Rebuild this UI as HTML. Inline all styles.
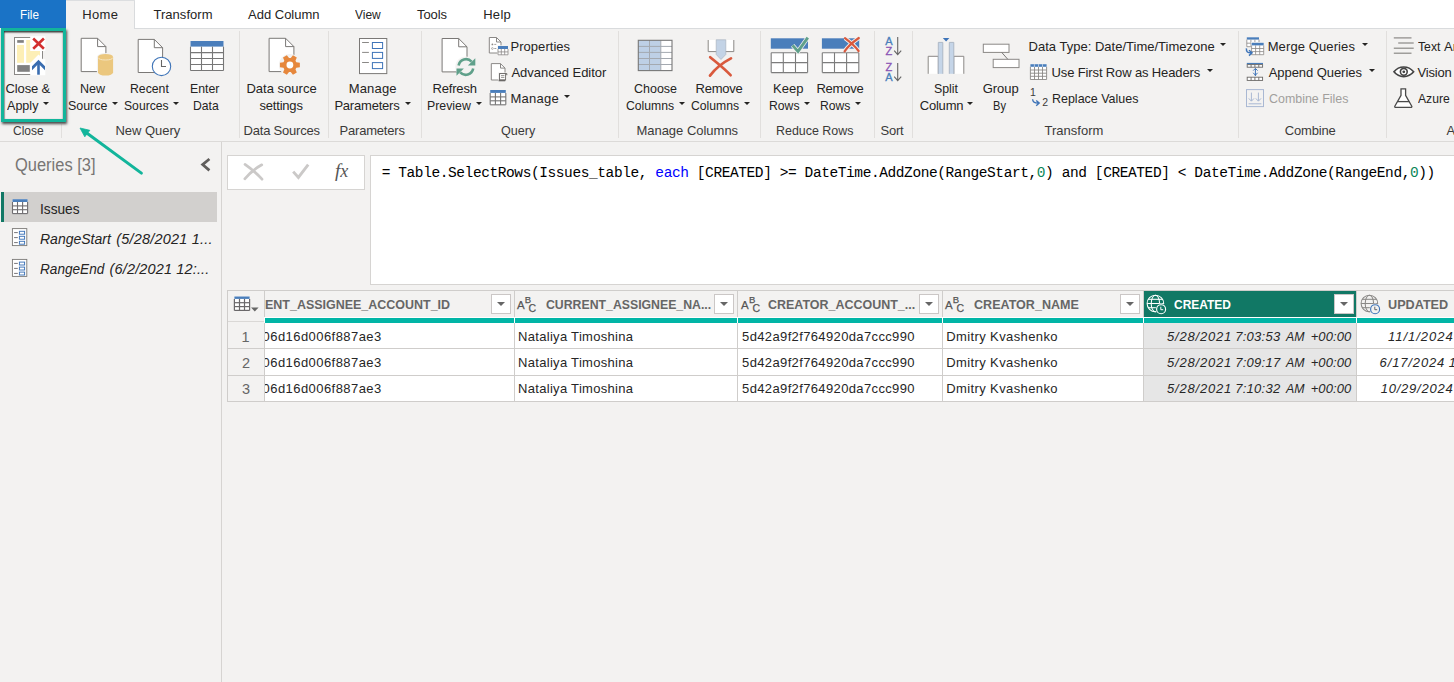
<!DOCTYPE html>
<html lang="en"><head><meta charset="utf-8"><title>Power Query Editor</title>
<style>
html,body{margin:0;padding:0}
body{width:1454px;height:682px;overflow:hidden;position:relative;background:#f3f2f1;font-family:"Liberation Sans",sans-serif;color:#252423}
.a{position:absolute}
.t{position:absolute;white-space:pre;line-height:20px}
.sep{position:absolute;top:31px;width:1px;height:107px;background:#e1dfdd}
.dd{position:absolute;width:0;height:0;border-left:3.1px solid transparent;border-right:3.1px solid transparent;border-top:3.1px solid #252423}
.hb{position:absolute;top:294px;width:18px;height:18px;background:#fff;border:1px solid #cbc7c6}
.hb:after{content:"";position:absolute;left:5px;top:7px;border-left:4.1px solid transparent;border-right:4.1px solid transparent;border-top:4.2px solid #666}
.cell{position:absolute;background:#fff}
.mono{font-family:"Liberation Mono",monospace}
svg{position:absolute;left:0;top:0}
</style></head><body>
<div class="a" style="left:0;top:0;width:1454px;height:28px;background:#fff"></div>
<div class="a" style="left:134px;top:28px;width:1320px;height:1px;background:#d9dbdd"></div>
<div class="a" style="left:0;top:0;width:66px;height:28px;background:#1a73c6"></div>
<div class="a" style="left:66px;top:0;width:69px;height:29px;background:#f3f2f1;box-shadow:inset 0 1px 0 #dcdee0, inset -1px 0 0 #d9dbdd"></div>
<div class="a" style="left:0;top:141px;width:1454px;height:1px;background:#dcdad8"></div>
<div class="sep" style="left:61px;top:124px;height:14px"></div>
<div class="sep" style="left:239px"></div>
<div class="sep" style="left:328px"></div>
<div class="sep" style="left:421px"></div>
<div class="sep" style="left:618px"></div>
<div class="sep" style="left:760px"></div>
<div class="sep" style="left:874px"></div>
<div class="sep" style="left:912px"></div>
<div class="sep" style="left:1238px"></div>
<div class="sep" style="left:1386px"></div>
<div class="dd" style="left:42.8px;top:102px"></div>
<div class="dd" style="left:112px;top:102px"></div>
<div class="dd" style="left:172.9px;top:102px"></div>
<div class="dd" style="left:404.9px;top:102px"></div>
<div class="dd" style="left:476px;top:102px"></div>
<div class="dd" style="left:678.8px;top:102px"></div>
<div class="dd" style="left:744px;top:102px"></div>
<div class="dd" style="left:804px;top:102px"></div>
<div class="dd" style="left:855px;top:102px"></div>
<div class="dd" style="left:967px;top:102px"></div>
<div class="dd" style="left:563.8px;top:95.4px"></div>
<div class="dd" style="left:1220px;top:43.2px"></div>
<div class="dd" style="left:1206.8px;top:69.4px"></div>
<div class="dd" style="left:1362px;top:43.2px"></div>
<div class="dd" style="left:1369px;top:69.4px"></div>
<div class="a" style="left:1px;top:28px;width:59px;height:88px;border:3px solid #12b59b;box-shadow:0.5px 1.5px 2.5px rgba(0,0,0,.7), inset 0 1.5px 1.5px rgba(0,0,0,.75), inset 1px 0 1px rgba(0,0,0,.25)"></div>
<div class="a" style="left:221px;top:142px;width:1px;height:540px;background:#d6d4d2"></div>
<div class="a" style="left:1px;top:192px;width:216px;height:30px;background:#d2d0ce"></div>
<div class="a" style="left:1px;top:192px;width:3px;height:30px;background:#117865"></div>
<div class="a" style="left:227px;top:155px;width:136px;height:33px;background:#fff;border:1px solid #d6d4d2"></div>
<div class="a" style="left:370px;top:155px;width:1100px;height:128px;background:#fff;border:1px solid #d6d4d2"></div>
<div class="a" style="left:227px;top:290px;width:1240px;height:112px;background:#cfcdcb"></div>
<div class="a" style="left:228px;top:291px;width:36px;height:26px;background:#f3f2f1"></div>
<div class="a" style="left:265px;top:291px;width:249px;height:26px;background:#f3f2f1"></div>
<div class="a" style="left:264px;top:317px;width:250px;height:6px;background:#fff"></div>
<div class="a" style="left:265px;top:318px;width:248.7px;height:5px;background:#01b5a6"></div>
<div class="a" style="left:515px;top:291px;width:222px;height:26px;background:#f3f2f1"></div>
<div class="a" style="left:514px;top:317px;width:223px;height:6px;background:#fff"></div>
<div class="a" style="left:515px;top:318px;width:221.7px;height:5px;background:#01b5a6"></div>
<div class="a" style="left:738px;top:291px;width:204px;height:26px;background:#f3f2f1"></div>
<div class="a" style="left:737px;top:317px;width:205px;height:6px;background:#fff"></div>
<div class="a" style="left:738px;top:318px;width:203.7px;height:5px;background:#01b5a6"></div>
<div class="a" style="left:943px;top:291px;width:200px;height:26px;background:#f3f2f1"></div>
<div class="a" style="left:942px;top:317px;width:201px;height:6px;background:#fff"></div>
<div class="a" style="left:943px;top:318px;width:199.7px;height:5px;background:#01b5a6"></div>
<div class="a" style="left:1144px;top:291px;width:212px;height:26px;background:#117865"></div>
<div class="a" style="left:1143px;top:317px;width:213px;height:6px;background:#fff"></div>
<div class="a" style="left:1144px;top:318px;width:211.7px;height:5px;background:#01b5a6"></div>
<div class="a" style="left:1357px;top:291px;width:143px;height:26px;background:#f3f2f1"></div>
<div class="a" style="left:1356px;top:317px;width:144px;height:6px;background:#fff"></div>
<div class="a" style="left:1357px;top:318px;width:142.7px;height:5px;background:#01b5a6"></div>
<div class="a" style="left:228px;top:317px;width:36px;height:6px;background:#f3f2f1;border-bottom:0"></div>
<div class="a" style="left:228px;top:321px;width:36px;height:1px;background:#dad8d6"></div>
<div class="a" style="left:228px;top:323px;width:36px;height:25px;background:#f3f2f1"></div>
<div class="a" style="left:265px;top:323px;width:249px;height:25px;background:#fff"></div>
<div class="a" style="left:515px;top:323px;width:222px;height:25px;background:#fff"></div>
<div class="a" style="left:738px;top:323px;width:204px;height:25px;background:#fff"></div>
<div class="a" style="left:943px;top:323px;width:200px;height:25px;background:#fff"></div>
<div class="a" style="left:1144px;top:323px;width:212px;height:25px;background:#e6e6e6"></div>
<div class="a" style="left:1357px;top:323px;width:143px;height:25px;background:#fff"></div>
<div class="a" style="left:228px;top:349px;width:36px;height:26px;background:#f3f2f1"></div>
<div class="a" style="left:265px;top:349px;width:249px;height:26px;background:#fff"></div>
<div class="a" style="left:515px;top:349px;width:222px;height:26px;background:#fff"></div>
<div class="a" style="left:738px;top:349px;width:204px;height:26px;background:#fff"></div>
<div class="a" style="left:943px;top:349px;width:200px;height:26px;background:#fff"></div>
<div class="a" style="left:1144px;top:349px;width:212px;height:26px;background:#e6e6e6"></div>
<div class="a" style="left:1357px;top:349px;width:143px;height:26px;background:#fff"></div>
<div class="a" style="left:228px;top:376px;width:36px;height:25px;background:#f3f2f1"></div>
<div class="a" style="left:265px;top:376px;width:249px;height:25px;background:#fff"></div>
<div class="a" style="left:515px;top:376px;width:222px;height:25px;background:#fff"></div>
<div class="a" style="left:738px;top:376px;width:204px;height:25px;background:#fff"></div>
<div class="a" style="left:943px;top:376px;width:200px;height:25px;background:#fff"></div>
<div class="a" style="left:1144px;top:376px;width:212px;height:25px;background:#e6e6e6"></div>
<div class="a" style="left:1357px;top:376px;width:143px;height:25px;background:#fff"></div>
<div class="hb" style="left:491px"></div>
<div class="hb" style="left:714px"></div>
<div class="hb" style="left:919px"></div>
<div class="hb" style="left:1120px"></div>
<div class="hb" style="left:1334px"></div>
<svg width="1454" height="682" viewBox="0 0 1454 682">
<rect x="14.5" y="37.5" width="28.00" height="37.00" fill="#fff" stroke="#8a8886" stroke-width="1" />
<rect x="17.2" y="40.1" width="6.60" height="2.70" fill="#808080" stroke="none" stroke-width="1" />
<rect x="17" y="45" width="7.00" height="17.80" fill="#fdefb6" stroke="none" stroke-width="1" />
<path d="M26.2 40.1H40V55.2L30.5 62.8H26.2Z" fill="#fdefb6"/>
<rect x="17.2" y="65.1" width="12.60" height="6.70" fill="#808080" stroke="none" stroke-width="1" />
<rect x="30.2" y="36.2" width="15.10" height="14.80" fill="#fff" stroke="none" stroke-width="1" />
<path d="M38.5 54.6L30.2 62.9V75.2H45.3V59.2L42.9 59.2L40.6 56.7Z" fill="#fff"/>
<path d="M33.2 38.5L43.9 48.7M43.9 38.5L33.2 48.7" stroke="#d32f2f" stroke-width="2.6" fill="none"/>
<path d="M38.5 59.8L45 66.3V70.2L38.5 63.7L32 70.2V66.3Z" fill="#3a6db0"/>
<rect x="37.2" y="62.5" width="2.60" height="12.20" fill="#3a6db0" stroke="none" stroke-width="1" />
<path d="M81.2 38.3H97.60000000000001L105.9 46.599999999999994V71.6H81.2Z" fill="#fff" stroke="#7a7876" stroke-width="1"/>
<path d="M97.60000000000001 38.3V46.599999999999994H105.9" fill="none" stroke="#7a7876" stroke-width="1"/>
<path d="M97.4 57V72.6A7.8 3 0 0 0 113.7 72.6V57A7.8 3.4 0 0 0 97.4 57Z" fill="#f3f2f1" stroke="#f3f2f1" stroke-width="1"/>
<path d="M98 57V72.6A7.55 2.9 0 0 0 113.1 72.6V57Z" fill="#ebc77e"/>
<ellipse cx="105.55" cy="56.9" rx="7.55" ry="2.9" fill="#ebc77e"/>
<path d="M98.2 57.6A7.4 2.7 0 0 0 112.9 57.6" fill="none" stroke="#f6e7c6" stroke-width="0.9"/>
<path d="M138.2 39.4H154.29999999999998L162.6 47.7V72.5H138.2Z" fill="#fff" stroke="#7a7876" stroke-width="1"/>
<path d="M154.29999999999998 39.4V47.7H162.6" fill="none" stroke="#7a7876" stroke-width="1"/>
<circle cx="161.5" cy="66.4" r="9.2" fill="#fff" stroke="#3e74b8" stroke-width="1.1"/>
<path d="M161.5 60V66.5H166" fill="none" stroke="#666" stroke-width="1.1"/>
<rect x="190.5" y="41" width="33.00" height="29.50" fill="#fff" stroke="none" stroke-width="1" />
<rect x="190.5" y="41" width="33.00" height="5.60" fill="#4a7ebb" stroke="none" stroke-width="1" />
<line x1="201.5" y1="46.6" x2="201.5" y2="70.5" stroke="#777" stroke-width="1.1" />
<line x1="212.5" y1="46.6" x2="212.5" y2="70.5" stroke="#777" stroke-width="1.1" />
<line x1="190.5" y1="52.6" x2="223.5" y2="52.6" stroke="#777" stroke-width="1.1" />
<line x1="190.5" y1="58.5" x2="223.5" y2="58.5" stroke="#777" stroke-width="1.1" />
<line x1="190.5" y1="64.5" x2="223.5" y2="64.5" stroke="#777" stroke-width="1.1" />
<line x1="190.5" y1="70.5" x2="223.5" y2="70.5" stroke="#777" stroke-width="1.1" />
<line x1="190.5" y1="46.6" x2="190.5" y2="70.5" stroke="#777" stroke-width="1.1" />
<line x1="223.5" y1="46.6" x2="223.5" y2="70.5" stroke="#777" stroke-width="1.1" />
<path d="M269.1 38.3H285.59999999999997L293.9 46.599999999999994V71.6H269.1Z" fill="#fff" stroke="#7a7876" stroke-width="1"/>
<path d="M285.59999999999997 38.3V46.599999999999994H293.9" fill="none" stroke="#7a7876" stroke-width="1"/>
<circle cx="289.9" cy="65.0" r="11" fill="#f3f2f1"/>
<path d="M296.35 62.27L299.85 62.77L299.85 67.23L296.35 67.73L295.48 69.22L296.80 72.51L292.95 74.73L290.76 71.95L289.04 71.95L286.85 74.73L283.00 72.51L284.32 69.22L283.45 67.73L279.95 67.23L279.95 62.77L283.45 62.27L284.32 60.78L283.00 57.49L286.85 55.27L289.04 58.05L290.76 58.05L292.95 55.27L296.80 57.49L295.48 60.78Z" fill="#e6873c"/>
<circle cx="289.9" cy="65.0" r="3.4" fill="#fff"/>
<rect x="359.5" y="38.5" width="27.30" height="35.10" fill="#fff" stroke="#7a7876" stroke-width="1" />
<line x1="362.1" y1="42.5" x2="368.9" y2="42.5" stroke="#8a8886" stroke-width="1" />
<line x1="362.1" y1="52.4" x2="368.9" y2="52.4" stroke="#8a8886" stroke-width="1" />
<line x1="362.1" y1="62.5" x2="368.9" y2="62.5" stroke="#8a8886" stroke-width="1" />
<rect x="372.4" y="42.5" width="10.20" height="6.00" fill="#fff" stroke="#3e74b8" stroke-width="1" />
<rect x="372.4" y="52.4" width="10.20" height="6.00" fill="#fff" stroke="#3e74b8" stroke-width="1" />
<rect x="372.4" y="62.599999999999994" width="10.20" height="6.00" fill="#fff" stroke="#3e74b8" stroke-width="1" />
<path d="M442.1 38.5H458.7L467 46.8V71.9H442.1Z" fill="#fff" stroke="#7a7876" stroke-width="1"/>
<path d="M458.7 38.5V46.8H467" fill="none" stroke="#7a7876" stroke-width="1"/>
<circle cx="465.9" cy="67" r="10.6" fill="#f3f2f1"/>
<path d="M458.6 65.4A7.6 7.6 0 0 1 471.6 61.6" fill="none" stroke="#5fa08a" stroke-width="2.6"/>
<path d="M475.3 58.2V65.6H467.9Z" fill="#5fa08a"/>
<path d="M473.2 68.6A7.6 7.6 0 0 1 460.2 72.4" fill="none" stroke="#5fa08a" stroke-width="2.6"/>
<path d="M456.5 75.8V68.4H463.9Z" fill="#5fa08a"/>
<path d="M489.3 37.5H496.5L501 42.0V53H489.3Z" fill="#fff" stroke="#8a8886" stroke-width="1"/>
<path d="M496.5 37.5V42.0H501" fill="none" stroke="#8a8886" stroke-width="1"/>
<circle cx="492.4" cy="44.4" r="0.9" fill="#8a8886"/><circle cx="492.4" cy="48.5" r="0.9" fill="none" stroke="#8a8886" stroke-width="0.6"/>
<line x1="494.3" y1="44.4" x2="496.3" y2="44.4" stroke="#8a8886" stroke-width="0.8" />
<line x1="494.3" y1="48.5" x2="496.3" y2="48.5" stroke="#8a8886" stroke-width="0.8" />
<rect x="497.3" y="45.3" width="11.40" height="10.20" fill="#f3f2f1" stroke="none" stroke-width="1" />
<rect x="498" y="46" width="10.00" height="8.80" fill="#fff" stroke="none" stroke-width="1" />
<rect x="498" y="46" width="10.00" height="3.00" fill="#4a7ebb" stroke="none" stroke-width="1" />
<line x1="501.3" y1="49" x2="501.3" y2="54.8" stroke="#8a8886" stroke-width="0.8" />
<line x1="504.7" y1="49" x2="504.7" y2="54.8" stroke="#8a8886" stroke-width="0.8" />
<line x1="498" y1="51.9" x2="508" y2="51.9" stroke="#8a8886" stroke-width="0.8" />
<line x1="498" y1="54.8" x2="508" y2="54.8" stroke="#8a8886" stroke-width="0.8" />
<line x1="498" y1="49" x2="498" y2="54.8" stroke="#8a8886" stroke-width="0.8" />
<line x1="508" y1="49" x2="508" y2="54.8" stroke="#8a8886" stroke-width="0.8" />
<path d="M491.3 63.6H500.5L505 68.1V80H491.3Z" fill="#fff" stroke="#8a8886" stroke-width="1"/>
<path d="M500.5 63.6V68.1H505" fill="none" stroke="#8a8886" stroke-width="1"/>
<rect x="498" y="72.5" width="9.80" height="9.30" fill="#f3f2f1" stroke="none" stroke-width="1" />
<path d="M499.6 73.6H506.8V75.2M499.6 73.6V79.6" fill="none" stroke="#6a6866" stroke-width="1"/>
<rect x="499.6" y="73.6" width="6.00" height="6.40" fill="#fff" stroke="#6a6866" stroke-width="0.9" />
<line x1="501" y1="75.6" x2="504.4" y2="75.6" stroke="#6a6866" stroke-width="0.7" />
<line x1="501" y1="77.4" x2="504.4" y2="77.4" stroke="#6a6866" stroke-width="0.7" />
<rect x="498.6" y="79.6" width="6.60" height="1.70" fill="#6a6866" stroke="none" stroke-width="1" />
<rect x="490.2" y="90" width="15.60" height="14.80" fill="#fff" stroke="none" stroke-width="1" />
<rect x="490.2" y="90" width="15.60" height="2.90" fill="#4a7ebb" stroke="none" stroke-width="1" />
<line x1="495.4" y1="92.9" x2="495.4" y2="104.8" stroke="#747474" stroke-width="1.1" />
<line x1="500.6" y1="92.9" x2="500.6" y2="104.8" stroke="#747474" stroke-width="1.1" />
<line x1="490.2" y1="96.9" x2="505.8" y2="96.9" stroke="#747474" stroke-width="1.1" />
<line x1="490.2" y1="100.8" x2="505.8" y2="100.8" stroke="#747474" stroke-width="1.1" />
<line x1="490.2" y1="104.8" x2="505.8" y2="104.8" stroke="#747474" stroke-width="1.1" />
<line x1="490.2" y1="92.9" x2="490.2" y2="104.8" stroke="#747474" stroke-width="1.1" />
<line x1="505.8" y1="92.9" x2="505.8" y2="104.8" stroke="#747474" stroke-width="1.1" />
<rect x="638.3" y="40.3" width="22.50" height="30.30" fill="#bed0e6" stroke="none" stroke-width="1" />
<rect x="660.8" y="40.3" width="11.20" height="30.30" fill="#fff" stroke="none" stroke-width="1" />
<line x1="638.3" y1="46.4" x2="672" y2="46.4" stroke="#a4a9b0" stroke-width="1" />
<line x1="638.3" y1="52.4" x2="672" y2="52.4" stroke="#a4a9b0" stroke-width="1" />
<line x1="638.3" y1="58.5" x2="672" y2="58.5" stroke="#a4a9b0" stroke-width="1" />
<line x1="638.3" y1="64.5" x2="672" y2="64.5" stroke="#a4a9b0" stroke-width="1" />
<line x1="649.5" y1="40.3" x2="649.5" y2="70.6" stroke="#a4a9b0" stroke-width="1" />
<line x1="660.8" y1="40.3" x2="660.8" y2="70.6" stroke="#a4a9b0" stroke-width="1" />
<rect x="638.3" y="40.3" width="33.70" height="30.30" fill="none" stroke="#777" stroke-width="1.1" />
<path d="M708.2 40V51.6H733.8V40" fill="#fff" stroke="#8a8886" stroke-width="1"/>
<path d="M716.2 39.8H725.8V54.5L721 59.5L716.2 54.5Z" fill="#c3d3e6" stroke="#aab4c0" stroke-width="0.7"/>
<path d="M710.2 57.2C716 62 724 68 730.6 75.2M731 58.4C724 62 715 69 710 75.6" fill="none" stroke="#d9593d" stroke-width="2.7" stroke-linecap="round"/>
<rect x="770.8" y="38.3" width="37.20" height="10.40" fill="#4a7ebb" stroke="none" stroke-width="1" />
<rect x="771.1999999999999" y="52.7" width="36.40" height="19.90" fill="#fff" stroke="none" stroke-width="1" />
<line x1="783.3" y1="52.7" x2="783.3" y2="72.6" stroke="#7c7c7c" stroke-width="1.1" />
<line x1="795.5" y1="52.7" x2="795.5" y2="72.6" stroke="#7c7c7c" stroke-width="1.1" />
<line x1="771.1999999999999" y1="52.7" x2="807.6" y2="52.7" stroke="#7c7c7c" stroke-width="1.1" />
<line x1="771.1999999999999" y1="62.6" x2="807.6" y2="62.6" stroke="#7c7c7c" stroke-width="1.1" />
<line x1="771.1999999999999" y1="72.6" x2="807.6" y2="72.6" stroke="#7c7c7c" stroke-width="1.1" />
<line x1="771.1999999999999" y1="52.7" x2="771.1999999999999" y2="72.6" stroke="#7c7c7c" stroke-width="1.1" />
<line x1="807.6" y1="52.7" x2="807.6" y2="72.6" stroke="#7c7c7c" stroke-width="1.1" />
<path d="M792.6 45.4L798 51.4L807.8 37.6" fill="none" stroke="#f3f2f1" stroke-width="4.4"/>
<path d="M792.6 45.4L798 51.4L807.8 37.6" fill="none" stroke="#5fa08a" stroke-width="2.9"/>
<rect x="821.9" y="38.3" width="37.30" height="10.40" fill="#4a7ebb" stroke="none" stroke-width="1" />
<rect x="822.3" y="52.7" width="36.50" height="19.90" fill="#fff" stroke="none" stroke-width="1" />
<line x1="834.5" y1="52.7" x2="834.5" y2="72.6" stroke="#7c7c7c" stroke-width="1.1" />
<line x1="846.6" y1="52.7" x2="846.6" y2="72.6" stroke="#7c7c7c" stroke-width="1.1" />
<line x1="822.3" y1="52.7" x2="858.8000000000001" y2="52.7" stroke="#7c7c7c" stroke-width="1.1" />
<line x1="822.3" y1="62.6" x2="858.8000000000001" y2="62.6" stroke="#7c7c7c" stroke-width="1.1" />
<line x1="822.3" y1="72.6" x2="858.8000000000001" y2="72.6" stroke="#7c7c7c" stroke-width="1.1" />
<line x1="822.3" y1="52.7" x2="822.3" y2="72.6" stroke="#7c7c7c" stroke-width="1.1" />
<line x1="858.8000000000001" y1="52.7" x2="858.8000000000001" y2="72.6" stroke="#7c7c7c" stroke-width="1.1" />
<path d="M845 38.2C850 42 855 46 858.6 51M858.8 38C853 42 848 46 844.6 51.4" fill="none" stroke="#f3f2f1" stroke-width="4"/>
<path d="M845 38.2C850 42 855 46 858.6 51M858.8 38C853 42 848 46 844.6 51.4" fill="none" stroke="#d9593d" stroke-width="2.2" stroke-linecap="round"/>
<text x="888.8" y="45.1" font-family="Liberation Sans, sans-serif" font-size="11" text-anchor="middle" fill="#4a7ebb" stroke="#4a7ebb" stroke-width="0.3">A</text>
<text x="888.8" y="54.9" font-family="Liberation Sans, sans-serif" font-size="11" text-anchor="middle" fill="#8b55b5" stroke="#8b55b5" stroke-width="0.3">Z</text>
<path d="M897.7 37V54.4M894.2 50.6L897.7 54.6L901.2 50.6" fill="none" stroke="#666" stroke-width="1.1"/>
<text x="888.8" y="70.6" font-family="Liberation Sans, sans-serif" font-size="11" text-anchor="middle" fill="#8b55b5" stroke="#8b55b5" stroke-width="0.3">Z</text>
<text x="888.8" y="80.9" font-family="Liberation Sans, sans-serif" font-size="11" text-anchor="middle" fill="#4a7ebb" stroke="#4a7ebb" stroke-width="0.3">A</text>
<path d="M897.7 63V80.4M894.2 76.6L897.7 80.6L901.2 76.6" fill="none" stroke="#666" stroke-width="1.1"/>
<path d="M942.8 38H949.4L946.1 41.4Z" fill="#3e74b8"/>
<path d="M928.2 73.8V56.3H938.3V73.8" fill="#fff" stroke="#8a8886"/>
<path d="M953.8 73.8V56.3H963.8V73.8" fill="#fff" stroke="#8a8886"/>
<path d="M938.3 73.8V42.4H942.8V73.8" fill="#c5d5e8" stroke="#a9b4c2" stroke-width="0.9"/>
<path d="M949.3 73.8V42.4H953.8V73.8" fill="#c5d5e8" stroke="#a9b4c2" stroke-width="0.9"/>
<rect x="983.3" y="44.2" width="25.70" height="8.20" fill="#fff" stroke="#8a8886" stroke-width="1" />
<rect x="993.2" y="59.3" width="25.80" height="8.30" fill="#fff" stroke="#8a8886" stroke-width="1" />
<line x1="1001.7" y1="52.4" x2="1007.8" y2="59.3" stroke="#7a7876" stroke-width="1" />
<rect x="1030.4" y="64.2" width="16.20" height="15.30" fill="#fff" stroke="none" stroke-width="1" />
<rect x="1030.4" y="64.2" width="16.20" height="2.60" fill="#4a7ebb" stroke="none" stroke-width="1" />
<line x1="1034.5" y1="66.8" x2="1034.5" y2="79.5" stroke="#8a8886" stroke-width="0.9" />
<line x1="1038.5" y1="66.8" x2="1038.5" y2="79.5" stroke="#8a8886" stroke-width="0.9" />
<line x1="1042.5" y1="66.8" x2="1042.5" y2="79.5" stroke="#8a8886" stroke-width="0.9" />
<line x1="1030.4" y1="70.0" x2="1046.6" y2="70.0" stroke="#8a8886" stroke-width="0.9" />
<line x1="1030.4" y1="73.2" x2="1046.6" y2="73.2" stroke="#8a8886" stroke-width="0.9" />
<line x1="1030.4" y1="76.3" x2="1046.6" y2="76.3" stroke="#8a8886" stroke-width="0.9" />
<line x1="1030.4" y1="79.5" x2="1046.6" y2="79.5" stroke="#8a8886" stroke-width="0.9" />
<line x1="1030.4" y1="66.8" x2="1030.4" y2="79.5" stroke="#8a8886" stroke-width="0.9" />
<line x1="1046.6" y1="66.8" x2="1046.6" y2="79.5" stroke="#8a8886" stroke-width="0.9" />
<line x1="1034.4" y1="64.2" x2="1034.4" y2="66.8" stroke="#dfe8f3" stroke-width="0.7" />
<line x1="1038.5" y1="64.2" x2="1038.5" y2="66.8" stroke="#dfe8f3" stroke-width="0.7" />
<line x1="1042.5" y1="64.2" x2="1042.5" y2="66.8" stroke="#dfe8f3" stroke-width="0.7" />
<text x="1030" y="96.4" font-family="Liberation Sans, sans-serif" font-size="10.5" fill="#3b3a39">1</text>
<text x="1042.3" y="106.4" font-family="Liberation Sans, sans-serif" font-size="10.5" fill="#3b3a39">2</text>
<path d="M1032.6 99.2C1032.8 102.4 1034.6 103.2 1038.6 103.1M1036.2 100.4L1039.2 103.1L1036.2 105.8" fill="none" stroke="#3e74b8" stroke-width="1.4"/>
<rect x="1246.8" y="37.3" width="12.20" height="9.40" fill="#fff" stroke="none" stroke-width="1" />
<rect x="1246.8" y="37.3" width="12.20" height="2.30" fill="#4a7ebb" stroke="none" stroke-width="1" />
<line x1="1250.9" y1="39.6" x2="1250.9" y2="46.7" stroke="#8a8886" stroke-width="0.8" />
<line x1="1254.9" y1="39.6" x2="1254.9" y2="46.7" stroke="#8a8886" stroke-width="0.8" />
<line x1="1246.8" y1="43.2" x2="1259" y2="43.2" stroke="#8a8886" stroke-width="0.8" />
<line x1="1246.8" y1="46.7" x2="1259" y2="46.7" stroke="#8a8886" stroke-width="0.8" />
<line x1="1246.8" y1="39.6" x2="1246.8" y2="46.7" stroke="#8a8886" stroke-width="0.8" />
<line x1="1259" y1="39.6" x2="1259" y2="46.7" stroke="#8a8886" stroke-width="0.8" />
<rect x="1250.8" y="42" width="13.60" height="13.40" fill="#f3f2f1" stroke="none" stroke-width="1" />
<rect x="1251.6" y="42.8" width="12.10" height="11.90" fill="#fff" stroke="none" stroke-width="1" />
<rect x="1251.6" y="42.8" width="12.10" height="2.60" fill="#4a7ebb" stroke="none" stroke-width="1" />
<line x1="1255.6" y1="45.4" x2="1255.6" y2="54.7" stroke="#8a8886" stroke-width="0.8" />
<line x1="1259.7" y1="45.4" x2="1259.7" y2="54.7" stroke="#8a8886" stroke-width="0.8" />
<line x1="1251.6" y1="48.5" x2="1263.7" y2="48.5" stroke="#8a8886" stroke-width="0.8" />
<line x1="1251.6" y1="51.6" x2="1263.7" y2="51.6" stroke="#8a8886" stroke-width="0.8" />
<line x1="1251.6" y1="54.7" x2="1263.7" y2="54.7" stroke="#8a8886" stroke-width="0.8" />
<line x1="1251.6" y1="45.4" x2="1251.6" y2="54.7" stroke="#8a8886" stroke-width="0.8" />
<line x1="1263.7" y1="45.4" x2="1263.7" y2="54.7" stroke="#8a8886" stroke-width="0.8" />
<path d="M1246.4 48.4C1246.2 52 1247.6 52.9 1251.4 52.8M1249 50.2L1252 52.8L1249 55.6" fill="none" stroke="#3e74b8" stroke-width="1.5"/>
<rect x="1246.8" y="62.9" width="16.20" height="1.50" fill="#4a7ebb" stroke="none" stroke-width="1" />
<rect x="1247.2" y="64.6" width="15.40" height="2.60" fill="#fff" stroke="#6a6866" stroke-width="0.9" />
<line x1="1251.1" y1="64.6" x2="1251.1" y2="67.2" stroke="#6a6866" stroke-width="0.9" />
<line x1="1254.9" y1="64.6" x2="1254.9" y2="67.2" stroke="#6a6866" stroke-width="0.9" />
<line x1="1258.8" y1="64.6" x2="1258.8" y2="67.2" stroke="#6a6866" stroke-width="0.9" />
<rect x="1247.2" y="77.2" width="15.40" height="3.20" fill="#fff" stroke="#6a6866" stroke-width="0.9" />
<line x1="1251.1" y1="77.2" x2="1251.1" y2="80.4" stroke="#6a6866" stroke-width="0.9" />
<line x1="1254.9" y1="77.2" x2="1254.9" y2="80.4" stroke="#6a6866" stroke-width="0.9" />
<line x1="1258.8" y1="77.2" x2="1258.8" y2="80.4" stroke="#6a6866" stroke-width="0.9" />
<path d="M1255.4 68.6V76M1253.2 70.6L1255.4 68.4L1257.6 70.6M1253.2 72.8L1255.4 75.2L1257.6 72.8" fill="none" stroke="#3e74b8" stroke-width="1"/>
<rect x="1246.5" y="89.6" width="17.00" height="17.00" fill="none" stroke="#a9b8d3" stroke-width="1" />
<path d="M1251.4 92.6V101M1248.8 98.4L1251.4 101.2L1254 98.4M1258.4 92.6V101M1255.8 98.4L1258.4 101.2L1261 98.4M1248.6 103.8H1261.4" fill="none" stroke="#a9b8d3" stroke-width="1"/>
<line x1="1393.8" y1="37.9" x2="1411.5" y2="37.9" stroke="#8a8886" stroke-width="1.2" />
<line x1="1398.2" y1="43" x2="1413.7" y2="43" stroke="#8a8886" stroke-width="1.2" />
<line x1="1393.8" y1="48.2" x2="1413.7" y2="48.2" stroke="#8a8886" stroke-width="1.2" />
<line x1="1393.8" y1="53.2" x2="1411.5" y2="53.2" stroke="#8a8886" stroke-width="1.2" />
<path d="M1394 71.8C1399 65.4 1408.4 65.4 1413.6 71.8C1408.4 78.2 1399 78.2 1394 71.8Z" fill="#fff" stroke="#444" stroke-width="1.7"/>
<circle cx="1403.8" cy="71.8" r="3.4" fill="#fff" stroke="#444" stroke-width="1.6"/><circle cx="1403.8" cy="71.8" r="1.4" fill="#444"/>
<path d="M1400.4 88.8H1406.2M1401 88.8V95.4L1394.8 106.2Q1394.4 107.4 1395.8 107.4H1410.8Q1412.2 107.4 1411.8 106.2L1405.6 95.4V88.8" fill="#fff" stroke="#4a4a4a" stroke-width="1.3" stroke-linejoin="round"/>
<line x1="1397.4" y1="101.6" x2="1409.2" y2="101.6" stroke="#4a4a4a" stroke-width="1.3" />
<line x1="141.4" y1="173.1" x2="84" y2="131" stroke="#12b59b" stroke-width="3" stroke-linecap="round"/>
<path d="M80 128L89.8 130.3L84.8 136.8Z" fill="#12b59b" stroke="#12b59b" stroke-width="0.8" stroke-linejoin="round"/>
<path d="M209.4 159L202.6 164.6L209.4 170.4" fill="none" stroke="#605e5c" stroke-width="2.7"/>
<rect x="12.5" y="199.2" width="15.10" height="14.40" fill="#fff" stroke="none" stroke-width="1" />
<rect x="12.5" y="199.2" width="15.10" height="2.80" fill="#4a7ebb" stroke="none" stroke-width="1" />
<line x1="17.5" y1="202" x2="17.5" y2="213.6" stroke="#6f6d70" stroke-width="1.1" />
<line x1="22.6" y1="202" x2="22.6" y2="213.6" stroke="#6f6d70" stroke-width="1.1" />
<line x1="12.5" y1="205.9" x2="27.6" y2="205.9" stroke="#6f6d70" stroke-width="1.1" />
<line x1="12.5" y1="209.7" x2="27.6" y2="209.7" stroke="#6f6d70" stroke-width="1.1" />
<line x1="12.5" y1="213.6" x2="27.6" y2="213.6" stroke="#6f6d70" stroke-width="1.1" />
<line x1="12.5" y1="202" x2="12.5" y2="213.6" stroke="#6f6d70" stroke-width="1.1" />
<line x1="27.6" y1="202" x2="27.6" y2="213.6" stroke="#6f6d70" stroke-width="1.1" />
<rect x="12.4" y="228.6" width="14.40" height="17.00" fill="#fff" stroke="#7a7876" stroke-width="0.9" />
<line x1="14.1" y1="232.6" x2="17.8" y2="232.6" stroke="#77757a" stroke-width="1.0" />
<rect x="19.4" y="231.3" width="5.20" height="2.90" fill="#fff" stroke="#3e74b8" stroke-width="0.95" />
<line x1="14.1" y1="237.6" x2="17.8" y2="237.6" stroke="#77757a" stroke-width="1.0" />
<rect x="19.4" y="236.3" width="5.20" height="2.90" fill="#fff" stroke="#3e74b8" stroke-width="0.95" />
<line x1="14.1" y1="242.6" x2="17.8" y2="242.6" stroke="#77757a" stroke-width="1.0" />
<rect x="19.4" y="241.3" width="5.20" height="2.90" fill="#fff" stroke="#3e74b8" stroke-width="0.95" />
<rect x="12.4" y="259.4" width="14.40" height="17.00" fill="#fff" stroke="#7a7876" stroke-width="0.9" />
<line x1="14.1" y1="263.4" x2="17.8" y2="263.4" stroke="#77757a" stroke-width="1.0" />
<rect x="19.4" y="262.09999999999997" width="5.20" height="2.90" fill="#fff" stroke="#3e74b8" stroke-width="0.95" />
<line x1="14.1" y1="268.4" x2="17.8" y2="268.4" stroke="#77757a" stroke-width="1.0" />
<rect x="19.4" y="267.09999999999997" width="5.20" height="2.90" fill="#fff" stroke="#3e74b8" stroke-width="0.95" />
<line x1="14.1" y1="273.4" x2="17.8" y2="273.4" stroke="#77757a" stroke-width="1.0" />
<rect x="19.4" y="272.09999999999997" width="5.20" height="2.90" fill="#fff" stroke="#3e74b8" stroke-width="0.95" />
<path d="M245 164.4C251 168.6 257 173.6 262 179.2M261.8 164.8C255 168.6 249.4 173.4 244.8 178.8" fill="none" stroke="#cbc9c8" stroke-width="2.7" stroke-linecap="round"/>
<path d="M293.2 171.6L298.4 177.4L308.2 164.6" fill="none" stroke="#cbc9c8" stroke-width="2.9" stroke-linejoin="miter"/>
<text x="334.6" y="176.8" font-family="Liberation Serif, serif" font-style="italic" font-size="19" fill="#555"><tspan x="335">f</tspan><tspan x="340.2" font-size="18">x</tspan></text>
<rect x="234.4" y="296.5" width="15.20" height="13.90" fill="#fff" stroke="none" stroke-width="1" />
<rect x="234.4" y="296.5" width="15.20" height="2.40" fill="#4a7ebb" stroke="none" stroke-width="1" />
<line x1="239.5" y1="298.9" x2="239.5" y2="310.4" stroke="#6a686a" stroke-width="1.2" />
<line x1="244.5" y1="298.9" x2="244.5" y2="310.4" stroke="#6a686a" stroke-width="1.2" />
<line x1="234.4" y1="302.7" x2="249.6" y2="302.7" stroke="#6a686a" stroke-width="1.2" />
<line x1="234.4" y1="306.6" x2="249.6" y2="306.6" stroke="#6a686a" stroke-width="1.2" />
<line x1="234.4" y1="310.4" x2="249.6" y2="310.4" stroke="#6a686a" stroke-width="1.2" />
<line x1="234.4" y1="298.9" x2="234.4" y2="310.4" stroke="#6a686a" stroke-width="1.2" />
<line x1="249.6" y1="298.9" x2="249.6" y2="310.4" stroke="#6a686a" stroke-width="1.2" />
<path d="M251 307.4H258.6L254.8 311.4Z" fill="#666"/>
<text x="516.9000000000001" y="308.6" font-size="11.5" font-family="Liberation Sans, sans-serif" fill="#555" stroke="#555" stroke-width="0.25">A</text>
<text x="524.8000000000001" y="303.4" font-size="9.5" font-family="Liberation Sans, sans-serif" fill="#555" stroke="#555" stroke-width="0.25">B</text>
<text x="528.4000000000001" y="312.2" font-size="10.5" font-family="Liberation Sans, sans-serif" fill="#555" stroke="#555" stroke-width="0.25">C</text>
<text x="741.1" y="308.6" font-size="11.5" font-family="Liberation Sans, sans-serif" fill="#555" stroke="#555" stroke-width="0.25">A</text>
<text x="749.0" y="303.4" font-size="9.5" font-family="Liberation Sans, sans-serif" fill="#555" stroke="#555" stroke-width="0.25">B</text>
<text x="752.6" y="312.2" font-size="10.5" font-family="Liberation Sans, sans-serif" fill="#555" stroke="#555" stroke-width="0.25">C</text>
<text x="944.9000000000001" y="308.6" font-size="11.5" font-family="Liberation Sans, sans-serif" fill="#555" stroke="#555" stroke-width="0.25">A</text>
<text x="952.8000000000001" y="303.4" font-size="9.5" font-family="Liberation Sans, sans-serif" fill="#555" stroke="#555" stroke-width="0.25">B</text>
<text x="956.4000000000001" y="312.2" font-size="10.5" font-family="Liberation Sans, sans-serif" fill="#555" stroke="#555" stroke-width="0.25">C</text>
<g fill="none" stroke="#fff" stroke-width="1.05"><circle cx="1155.4" cy="303.5" r="8.3"/><ellipse cx="1155.4" cy="303.5" rx="4.2" ry="8.3"/><line x1="1148.2" y1="299.3" x2="1162.6000000000001" y2="299.3"/><line x1="1147.1000000000001" y1="303.5" x2="1163.7" y2="303.5"/><line x1="1148.2" y1="307.7" x2="1162.6000000000001" y2="307.7"/></g>
<circle cx="1161.1000000000001" cy="309.2" r="5.6" fill="#117865"/>
<circle cx="1161.1000000000001" cy="309.2" r="4.5" fill="#117865" stroke="#fff" stroke-width="1.15"/>
<path d="M1160.8 306.7V309.7H1163.2" fill="none" stroke="#fff" stroke-width="1"/>
<g fill="none" stroke="#8a8886" stroke-width="1.05"><circle cx="1369.4" cy="303.5" r="8.3"/><ellipse cx="1369.4" cy="303.5" rx="4.2" ry="8.3"/><line x1="1362.2" y1="299.3" x2="1376.6000000000001" y2="299.3"/><line x1="1361.1000000000001" y1="303.5" x2="1377.7" y2="303.5"/><line x1="1362.2" y1="307.7" x2="1376.6000000000001" y2="307.7"/></g>
<circle cx="1375.1000000000001" cy="309.2" r="5.6" fill="#f3f2f1"/>
<circle cx="1375.1000000000001" cy="309.2" r="4.5" fill="#f3f2f1" stroke="#3e74b8" stroke-width="1.15"/>
<path d="M1374.8 306.7V309.7H1377.2" fill="none" stroke="#666" stroke-width="1"/>
</svg>
<span class="t" style="left:20.30px;top:5.00px;font-size:13px;transform:scaleX(0.9028);transform-origin:0 0;color:#fff;">File</span>
<span class="t" style="left:82.20px;top:5.00px;font-size:13px;letter-spacing:0.351px;">Home</span>
<span class="t" style="left:153.40px;top:5.00px;font-size:13px;letter-spacing:0.048px;">Transform</span>
<span class="t" style="left:248.00px;top:5.00px;font-size:13px;">Add Column</span>
<span class="t" style="left:355.40px;top:5.00px;font-size:13px;transform:scaleX(0.9211);transform-origin:0 0;">View</span>
<span class="t" style="left:417.00px;top:5.00px;font-size:13px;letter-spacing:-0.087px;">Tools</span>
<span class="t" style="left:483.20px;top:5.00px;font-size:13px;letter-spacing:0.298px;">Help</span>
<span class="t" style="left:5.50px;top:79.00px;font-size:13px;letter-spacing:-0.125px;">Close &amp;</span>
<span class="t" style="left:6.60px;top:96.00px;font-size:13px;transform:scaleX(0.9661);transform-origin:0 0;">Apply</span>
<span class="t" style="left:79.74px;top:79.00px;font-size:13px;transform:scaleX(0.9642);transform-origin:0 0;">New</span>
<span class="t" style="left:68.30px;top:96.00px;font-size:13px;transform:scaleX(0.9546);transform-origin:0 0;">Source</span>
<span class="t" style="left:130.46px;top:79.00px;font-size:13px;transform:scaleX(0.9414);transform-origin:0 0;">Recent</span>
<span class="t" style="left:123.50px;top:96.00px;font-size:13px;transform:scaleX(0.9359);transform-origin:0 0;">Sources</span>
<span class="t" style="left:190.46px;top:79.00px;font-size:13px;transform:scaleX(0.9433);transform-origin:0 0;">Enter</span>
<span class="t" style="left:192.66px;top:96.00px;font-size:13px;transform:scaleX(0.9365);transform-origin:0 0;">Data</span>
<span class="t" style="left:246.40px;top:79.00px;font-size:13px;letter-spacing:0.024px;">Data source</span>
<span class="t" style="left:259.50px;top:96.00px;font-size:13px;letter-spacing:-0.200px;">settings</span>
<span class="t" style="left:348.70px;top:79.00px;font-size:13px;letter-spacing:0.170px;">Manage</span>
<span class="t" style="left:334.40px;top:96.00px;font-size:13px;letter-spacing:-0.210px;">Parameters</span>
<span class="t" style="left:432.60px;top:79.00px;font-size:13px;letter-spacing:-0.198px;">Refresh</span>
<span class="t" style="left:427.35px;top:96.00px;font-size:13px;transform:scaleX(0.9466);transform-origin:0 0;">Preview</span>
<span class="t" style="left:633.50px;top:79.00px;font-size:13px;transform:scaleX(0.9601);transform-origin:0 0;">Choose</span>
<span class="t" style="left:625.70px;top:96.00px;font-size:13px;transform:scaleX(0.9383);transform-origin:0 0;">Columns</span>
<span class="t" style="left:695.50px;top:79.00px;font-size:13px;letter-spacing:-0.215px;">Remove</span>
<span class="t" style="left:690.70px;top:96.00px;font-size:13px;transform:scaleX(0.9383);transform-origin:0 0;">Columns</span>
<span class="t" style="left:773.00px;top:79.00px;font-size:13px;letter-spacing:0.023px;">Keep</span>
<span class="t" style="left:768.56px;top:96.00px;font-size:13px;transform:scaleX(0.9373);transform-origin:0 0;">Rows</span>
<span class="t" style="left:816.40px;top:79.00px;font-size:13px;letter-spacing:-0.215px;">Remove</span>
<span class="t" style="left:819.77px;top:96.00px;font-size:13px;transform:scaleX(0.9342);transform-origin:0 0;">Rows</span>
<span class="t" style="left:933.50px;top:79.00px;font-size:13px;transform:scaleX(0.9503);transform-origin:0 0;">Split</span>
<span class="t" style="left:919.70px;top:96.00px;font-size:13px;letter-spacing:-0.193px;">Column</span>
<span class="t" style="left:982.70px;top:79.00px;font-size:13px;letter-spacing:-0.025px;">Group</span>
<span class="t" style="left:993.45px;top:96.00px;font-size:13px;transform:scaleX(0.8520);transform-origin:0 0;">By</span>
<span class="t" style="left:12.90px;top:121.00px;font-size:13px;transform:scaleX(0.9241);transform-origin:0 0;color:#3b3a39;">Close</span>
<span class="t" style="left:115.50px;top:121.00px;font-size:13px;letter-spacing:-0.040px;color:#3b3a39;">New Query</span>
<span class="t" style="left:243.60px;top:121.00px;font-size:13px;letter-spacing:-0.215px;color:#3b3a39;">Data Sources</span>
<span class="t" style="left:339.60px;top:121.00px;font-size:13px;letter-spacing:-0.210px;color:#3b3a39;">Parameters</span>
<span class="t" style="left:501.20px;top:121.00px;font-size:13px;transform:scaleX(0.9693);transform-origin:0 0;color:#3b3a39;">Query</span>
<span class="t" style="left:636.40px;top:121.00px;font-size:13px;letter-spacing:-0.014px;color:#3b3a39;">Manage Columns</span>
<span class="t" style="left:776.44px;top:121.00px;font-size:13px;transform:scaleX(0.9574);transform-origin:0 0;color:#3b3a39;">Reduce Rows</span>
<span class="t" style="left:880.40px;top:121.00px;font-size:13px;letter-spacing:-0.177px;color:#3b3a39;">Sort</span>
<span class="t" style="left:1044.50px;top:121.00px;font-size:13px;letter-spacing:0.010px;color:#3b3a39;">Transform</span>
<span class="t" style="left:1284.80px;top:121.00px;font-size:13px;letter-spacing:-0.183px;color:#3b3a39;">Combine</span>
<span class="t" style="left:1446.60px;top:121.00px;font-size:13px;letter-spacing:0.200px;color:#3b3a39;">AI Insights</span>
<span class="t" style="left:510.50px;top:37.00px;font-size:13px;letter-spacing:0.039px;">Properties</span>
<span class="t" style="left:511.50px;top:63.00px;font-size:13px;letter-spacing:-0.047px;">Advanced Editor</span>
<span class="t" style="left:510.50px;top:89.00px;font-size:13px;letter-spacing:0.250px;">Manage</span>
<span class="t" style="left:1028.60px;top:37.00px;font-size:13px;letter-spacing:0.009px;">Data Type: Date/Time/Timezone</span>
<span class="t" style="left:1051.60px;top:63.00px;font-size:13px;letter-spacing:-0.135px;">Use First Row as Headers</span>
<span class="t" style="left:1051.64px;top:89.00px;font-size:13px;transform:scaleX(0.9588);transform-origin:0 0;">Replace Values</span>
<span class="t" style="left:1267.70px;top:37.00px;font-size:13px;letter-spacing:0.102px;">Merge Queries</span>
<span class="t" style="left:1268.70px;top:63.00px;font-size:13px;letter-spacing:-0.058px;">Append Queries</span>
<span class="t" style="left:1268.70px;top:89.00px;font-size:13px;transform:scaleX(0.9559);transform-origin:0 0;color:#a19f9d;">Combine Files</span>
<span class="t" style="left:1418.10px;top:37.00px;font-size:13px;transform:scaleX(0.9410);transform-origin:0 0;">Text</span>
<span class="t" style="left:1443.90px;top:37.00px;font-size:13px;letter-spacing:0.300px;">Analytics</span>
<span class="t" style="left:1417.60px;top:63.00px;font-size:13px;letter-spacing:-0.228px;">Vision</span>
<span class="t" style="left:1417.60px;top:89.00px;font-size:13px;transform:scaleX(0.9339);transform-origin:0 0;">Azure</span>
<span class="t" style="left:1453.60px;top:89.00px;font-size:13px;letter-spacing:0.200px;">Machine Learning</span>
<span class="t" style="left:14.90px;top:155.00px;font-size:17.5px;transform:scaleX(0.9406);transform-origin:0 0;color:#787674;">Queries [3]</span>
<span class="t" style="left:39.76px;top:199.00px;font-size:14.5px;transform:scaleX(0.9445);transform-origin:0 0;">Issues</span>
<span class="t" style="left:40.40px;top:229.00px;font-size:14.5px;transform:scaleX(0.9661);transform-origin:0 0;font-style:italic;">RangeStart</span>
<span class="t" style="left:116.20px;top:229.00px;font-size:14.5px;letter-spacing:0.201px;font-style:italic;">(5/28/2021 1...</span>
<span class="t" style="left:40.40px;top:259.00px;font-size:14.5px;transform:scaleX(0.9386);transform-origin:0 0;font-style:italic;">RangeEnd</span>
<span class="t" style="left:109.60px;top:259.00px;font-size:14.5px;letter-spacing:0.146px;font-style:italic;">(6/2/2021 12:...</span>
<span class="t" style="left:545.50px;top:295.00px;font-size:13px;transform:scaleX(0.9449);transform-origin:0 0;color:#666666;font-weight:bold;">CURRENT_ASSIGNEE_NA...</span>
<span class="t" style="left:768.40px;top:295.00px;font-size:13px;transform:scaleX(0.9591);transform-origin:0 0;color:#666666;font-weight:bold;">CREATOR_ACCOUNT_...</span>
<span class="t" style="left:973.50px;top:295.00px;font-size:13px;transform:scaleX(0.9659);transform-origin:0 0;color:#666666;font-weight:bold;">CREATOR_NAME</span>
<span class="t" style="left:1174.40px;top:295.00px;font-size:13px;transform:scaleX(0.9206);transform-origin:0 0;color:#fff;font-weight:bold;">CREATED</span>
<span class="t" style="left:1387.60px;top:295.00px;font-size:13px;transform:scaleX(0.9726);transform-origin:0 0;color:#666666;font-weight:bold;">UPDATED</span>
<span class="t" style="left:518.10px;top:327.00px;font-size:13px;letter-spacing:0.298px;color:#262626;">Nataliya Timoshina</span>
<span class="t" style="left:742.10px;top:327.00px;font-size:13px;letter-spacing:0.362px;color:#262626;">5d42a9f2f764920da7ccc990</span>
<span class="t" style="left:946.20px;top:327.00px;font-size:13px;letter-spacing:0.390px;color:#262626;">Dmitry Kvashenko</span>
<span class="t" style="left:518.10px;top:353.00px;font-size:13px;letter-spacing:0.298px;color:#262626;">Nataliya Timoshina</span>
<span class="t" style="left:742.10px;top:353.00px;font-size:13px;letter-spacing:0.362px;color:#262626;">5d42a9f2f764920da7ccc990</span>
<span class="t" style="left:946.20px;top:353.00px;font-size:13px;letter-spacing:0.390px;color:#262626;">Dmitry Kvashenko</span>
<span class="t" style="left:518.10px;top:379.00px;font-size:13px;letter-spacing:0.298px;color:#262626;">Nataliya Timoshina</span>
<span class="t" style="left:742.10px;top:379.00px;font-size:13px;letter-spacing:0.362px;color:#262626;">5d42a9f2f764920da7ccc990</span>
<span class="t" style="left:946.20px;top:379.00px;font-size:13px;letter-spacing:0.390px;color:#262626;">Dmitry Kvashenko</span>
<span class="t" style="left:241.50px;top:327.00px;font-size:14.5px;color:#666;">1</span>
<span class="t" style="left:242.00px;top:353.00px;font-size:14.5px;color:#666;">2</span>
<span class="t" style="left:242.00px;top:379.00px;font-size:14.5px;color:#666;">3</span>
<div class="a" style="left:265px;top:291px;width:225px;height:26px;overflow:hidden"><span class="t" style="left:0.40px;top:4.00px;font-size:13px;transform:scaleX(0.9596);transform-origin:0 0;color:#666666;font-weight:bold;">ENT_ASSIGNEE_ACCOUNT_ID</span></div>
<div class="a" style="left:265px;top:323px;width:249px;height:25px;overflow:hidden"><span class="t" style="left:-2.40px;top:4.00px;font-size:13px;letter-spacing:0.438px;color:#262626;">06d16d006f887ae3</span></div>
<div class="a" style="left:265px;top:349px;width:249px;height:25px;overflow:hidden"><span class="t" style="left:-2.40px;top:4.00px;font-size:13px;letter-spacing:0.438px;color:#262626;">06d16d006f887ae3</span></div>
<div class="a" style="left:265px;top:376px;width:249px;height:25px;overflow:hidden"><span class="t" style="left:-2.40px;top:3.00px;font-size:13px;letter-spacing:0.438px;color:#262626;">06d16d006f887ae3</span></div>
<span class="t" style="left:1388.00px;top:327.00px;font-size:13px;letter-spacing:0.970px;color:#262626;font-style:italic;">11/1/2024</span>
<span class="t" style="left:1379.60px;top:353.00px;font-size:13px;letter-spacing:0.862px;color:#262626;font-style:italic;">6/17/2024</span>
<span class="t" style="left:1448.80px;top:353.00px;font-size:13px;color:#262626;font-style:italic;">1</span>
<span class="t" style="left:1380.80px;top:379.00px;font-size:13px;letter-spacing:0.752px;color:#262626;font-style:italic;">10/29/2024</span>
<span class="t" style="left:1167.00px;top:327.00px;font-size:13px;letter-spacing:0.812px;color:#262626;font-style:italic;">5/28/2021</span>
<span class="t" style="left:1235.30px;top:327.00px;font-size:13px;letter-spacing:0.243px;color:#262626;font-style:italic;">7:03:53</span>
<span class="t" style="left:1286.25px;top:327.00px;font-size:13px;transform:scaleX(0.9482);transform-origin:0 0;color:#262626;font-style:italic;">AM</span>
<span class="t" style="left:1310.70px;top:327.00px;font-size:13px;letter-spacing:0.081px;color:#262626;font-style:italic;">+00:00</span>
<span class="t" style="left:1167.00px;top:353.00px;font-size:13px;letter-spacing:0.812px;color:#262626;font-style:italic;">5/28/2021</span>
<span class="t" style="left:1235.30px;top:353.00px;font-size:13px;letter-spacing:0.243px;color:#262626;font-style:italic;">7:09:17</span>
<span class="t" style="left:1286.25px;top:353.00px;font-size:13px;transform:scaleX(0.9482);transform-origin:0 0;color:#262626;font-style:italic;">AM</span>
<span class="t" style="left:1310.70px;top:353.00px;font-size:13px;letter-spacing:0.081px;color:#262626;font-style:italic;">+00:00</span>
<span class="t" style="left:1167.00px;top:379.00px;font-size:13px;letter-spacing:0.812px;color:#262626;font-style:italic;">5/28/2021</span>
<span class="t" style="left:1235.30px;top:379.00px;font-size:13px;letter-spacing:0.243px;color:#262626;font-style:italic;">7:10:32</span>
<span class="t" style="left:1286.25px;top:379.00px;font-size:13px;transform:scaleX(0.9482);transform-origin:0 0;color:#262626;font-style:italic;">AM</span>
<span class="t" style="left:1310.70px;top:379.00px;font-size:13px;letter-spacing:0.081px;color:#262626;font-style:italic;">+00:00</span>
<span class="t mono" style="left:381.7px;top:163.00px;font-size:14.5px;letter-spacing:-0.409px;color:#000">= Table.SelectRows(Issues_table, <span style="color:#0000ff">each</span> [CREATED] &gt;= DateTime.AddZone(RangeStart,<span style="color:#098658">0</span>) and [CREATED] &lt; DateTime.AddZone(RangeEnd,<span style="color:#098658">0</span>))</span>
</body></html>
